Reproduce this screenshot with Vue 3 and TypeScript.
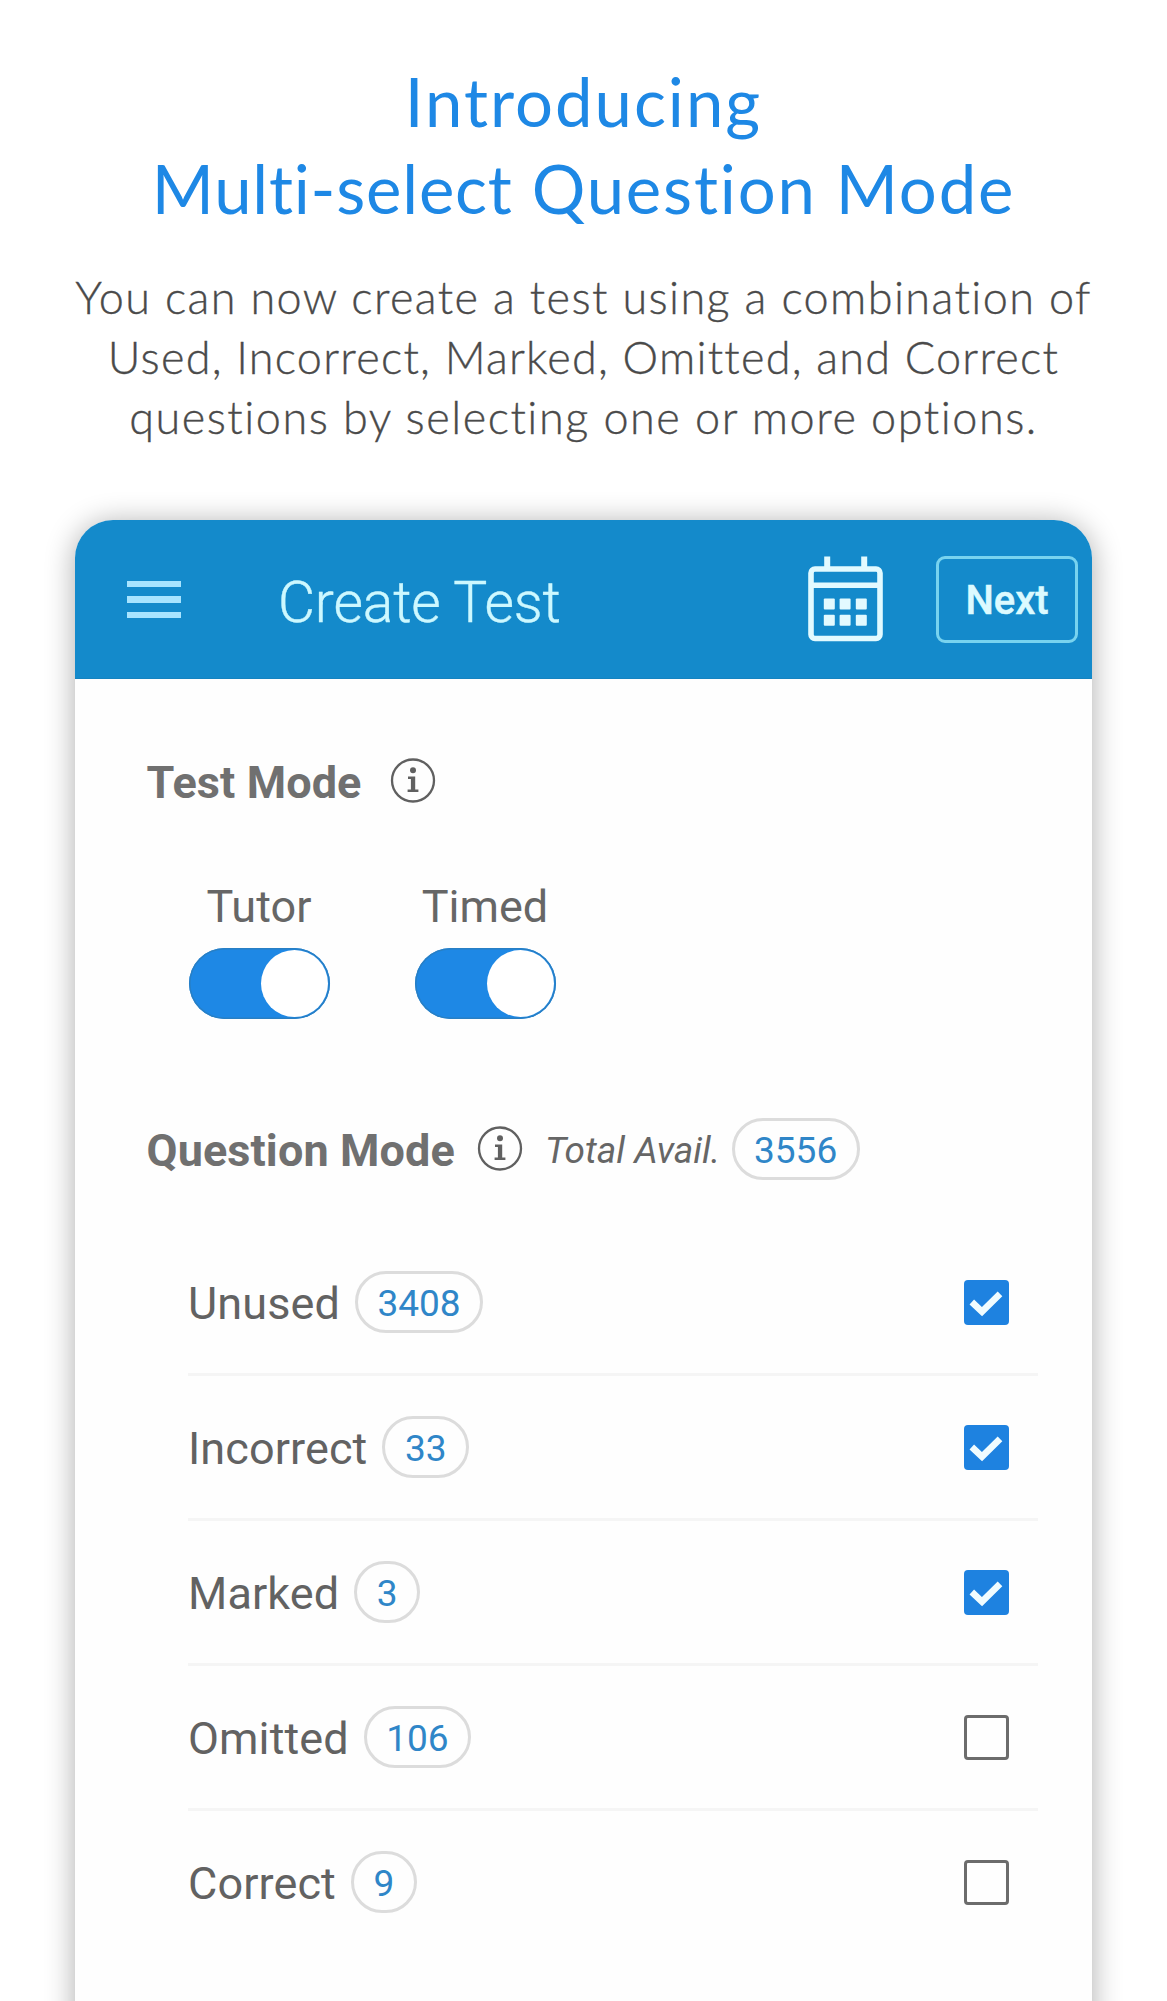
<script setup lang="ts">
import { ref } from 'vue'

interface Toggle { label: string; on: boolean }
interface Option { label: string; count: number; checked: boolean }

const toggles = ref<Toggle[]>([
  { label: 'Tutor', on: true },
  { label: 'Timed', on: true },
])

const total = 3556
const options = ref<Option[]>([
  { label: 'Unused', count: 3408, checked: true },
  { label: 'Incorrect', count: 33, checked: true },
  { label: 'Marked', count: 3, checked: true },
  { label: 'Omitted', count: 106, checked: false },
  { label: 'Correct', count: 9, checked: false },
])
</script>

<template>
  <main class="page">
    <h1 class="title">
      <span class="line t1">Introducing</span>
      <span class="line t2"><span class="tight">Multi-select</span> Question Mode</span>
    </h1>
    <p class="intro">
      <span class="line p1">You can now create a test using a combination of</span>
      <span class="line p2">Used, Incorrect, Marked, Omitted, and Correct</span>
      <span class="line p3">questions by selecting one or more options.</span>
    </p>

    <section class="card">
      <header class="bar">
        <div class="burger"><i></i><i></i><i></i></div>
        <div class="bar-title">Create Test</div>
        <svg class="calendar" width="75" height="86" viewBox="0 0 75 86">
          <g fill="none" stroke="#e2faff">
            <rect x="3" y="13" width="69" height="69.5" rx="4" stroke-width="5.6" />
            <path d="M3 29.3H72" stroke-width="5.6" />
            <path d="M19.2 0.5V12M56.2 0.5V12" stroke-width="6" />
          </g>
          <g fill="#e2faff">
            <rect x="15.8" y="42.5" width="11" height="11" rx="1" />
            <rect x="31.6" y="42.5" width="11" height="11" rx="1" />
            <rect x="47.8" y="42.5" width="11" height="11" rx="1" />
            <rect x="15.8" y="58.7" width="11" height="11" rx="1" />
            <rect x="31.6" y="58.7" width="11" height="11" rx="1" />
            <rect x="47.8" y="58.7" width="11" height="11" rx="1" />
          </g>
        </svg>
        <button class="next">Next</button>
      </header>

      <div class="body">
        <div class="heading">
          <h2 class="test">Test Mode</h2>
          <svg class="info" width="46" height="46" viewBox="0 0 46 46">
            <circle cx="23" cy="22.5" r="21" fill="none" stroke="#606060" stroke-width="2.3" />
            <circle cx="23" cy="12.2" r="3" fill="#606060" />
            <path d="M18 18.6H25.2V31.6H28.4V34H17.6V31.6H20.9V21H18Z" fill="#606060" />
          </svg>
        </div>

        <div class="toggles">
          <div v-for="t in toggles" :key="t.label" class="toggle-col">
            <span class="toggle-label">{{ t.label }}</span>
            <span class="toggle" :class="{ on: t.on }"><span class="knob"></span></span>
          </div>
        </div>

        <div class="heading question">
          <h2 class="qmode">Question Mode</h2>
          <svg class="info" width="46" height="46" viewBox="0 0 46 46">
            <circle cx="23" cy="22.5" r="21" fill="none" stroke="#606060" stroke-width="2.3" />
            <circle cx="23" cy="12.2" r="3" fill="#606060" />
            <path d="M18 18.6H25.2V31.6H28.4V34H17.6V31.6H20.9V21H18Z" fill="#606060" />
          </svg>
          <em class="avail">Total Avail.</em>
          <span class="badge">{{ total }}</span>
        </div>

        <ul class="options">
          <li v-for="o in options" :key="o.label" class="option">
            <span class="option-label">{{ o.label }}</span>
            <span class="badge">{{ o.count }}</span>
            <span class="box" :class="{ checked: o.checked }">
              <svg v-if="o.checked" width="45" height="45" viewBox="0 0 45 45">
                <path d="M7.8 22L18 31.6L36 13.8" fill="none" stroke="#f0fcff" stroke-width="6.6" />
              </svg>
            </span>
          </li>
        </ul>
      </div>
    </section>
  </main>
</template>

<style>
body {
  background: #fff;
}
</style>

<style scoped>
.page {
  box-sizing: border-box;
  height: 2001px;
  overflow: hidden;
  padding-top: 58px;
  font-family: Roboto, sans-serif;
}
.title,
.intro {
  margin: 0;
  text-align: center;
  font-family: Lato, sans-serif;
  font-variant-ligatures: none;
  white-space: nowrap;
}
.title {
  font-size: 67px;
  line-height: 86.5px;
  font-weight: 400;
  color: #1e88e5;
}
.intro {
  margin-top: 36px;
  font-size: 45px;
  line-height: 60px;
  font-weight: 300;
  color: #4a4a4a;
  -webkit-text-stroke: 0.35px #4a4a4a;
}
.line { display: block; }
.t1 { letter-spacing: 2px; }
.t2 { letter-spacing: 1.85px; }
.tight { letter-spacing: 0.8px; }
.p1 { letter-spacing: 1.4px; }
.p2 { letter-spacing: 1.24px; }
.p3 { letter-spacing: 1.52px; }

.card {
  width: 1017px;
  height: 1560px;
  margin: 73px 0 0 75px;
  border-radius: 38px 38px 0 0;
  background: #fefefe;
  box-shadow: 0 3px 30px rgba(0, 0, 0, 0.33);
  overflow: hidden;
}
.bar {
  box-sizing: border-box;
  display: flex;
  align-items: center;
  height: 158.5px;
  padding: 1px 14px 0 52px;
  background: #148acb;
  border-bottom: 1px solid #1583c0;
}
.burger {
  display: flex;
  flex-direction: column;
  gap: 9px;
  width: 54px;
}
.burger i {
  display: block;
  height: 6.5px;
  background: #a8e4ff;
}
.bar-title {
  margin-left: 97px;
  padding-top: 7px;
  font-size: 57px;
  line-height: 70px;
  font-weight: 300;
  letter-spacing: -0.15px;
  color: #cdf8ff;
  -webkit-text-stroke: 0.4px #cdf8ff;
}
.calendar {
  margin-left: auto;
}
.next {
  box-sizing: border-box;
  width: 142px;
  height: 87px;
  margin-left: 53px;
  padding: 4px 0 0;
  border: 3px solid #78d3ef;
  border-radius: 9px;
  background: none;
  font: 500 40px/50px Roboto, sans-serif;
  color: #dcfaff;
  -webkit-text-stroke: 0.5px #dcfaff;
}

.body {
  padding: 72px 54px 0 71.5px;
}
.heading {
  display: flex;
  align-items: center;
  height: 60px;
}
h2 {
  margin: 0;
  padding-top: 4px;
  font-size: 45px;
  line-height: 54px;
  font-weight: 700;
  color: #707070;
}
.test {
  width: 243px;
  letter-spacing: 0.1px;
}
.qmode {
  width: 330.5px;
  letter-spacing: 0.1px;
}
.info {
  flex: none;
}
.toggles {
  display: flex;
  gap: 85px;
  margin: 69px 0 0 42px;
}
.toggle-col {
  display: flex;
  flex-direction: column;
  align-items: center;
  gap: 14.5px;
  width: 141px;
}
.toggle-label {
  font-size: 45px;
  line-height: 54px;
  color: #666;
}
.toggle {
  box-sizing: border-box;
  display: flex;
  align-items: center;
  width: 141px;
  height: 71px;
  padding: 0 2px;
  border-radius: 36px;
  background: #9a9a9a;
}
.toggle.on {
  justify-content: flex-end;
  background: #1e88e5;
  box-shadow: inset 0 0 0 1.5px #287fc4;
}
.knob {
  width: 67px;
  height: 67px;
  border-radius: 50%;
  background: #fff;
}
.question {
  height: 62px;
  margin-top: 99px;
}
.avail {
  margin-left: 22px;
  padding-top: 3px;
  width: 186.5px;
  font-size: 37px;
  line-height: 44px;
  color: #666;
}
.badge {
  box-sizing: border-box;
  height: 62px;
  padding: 2px 19.5px 0;
  border: 3px solid #dcdcdc;
  border-radius: 31px;
  font-size: 37px;
  line-height: 56px;
  color: #2f86c8;
}
.options {
  margin: 51px 0 0 41px;
  padding: 0;
  list-style: none;
}
.option {
  box-sizing: border-box;
  display: flex;
  align-items: center;
  width: 850px;
  height: 145.1px;
  border-bottom: 3px solid #f5f5f5;
}
.option:last-child {
  border-bottom-color: transparent;
}
.option-label {
  margin-right: 15px;
  padding: 4px 0 0 0.5px;
  font-size: 45px;
  line-height: 54px;
  letter-spacing: 0.1px;
  color: #626262;
}
.box {
  box-sizing: border-box;
  width: 45px;
  height: 45px;
  margin: 0 28.5px 0 auto;
  border: 3px solid #6c6c6c;
  border-radius: 4px;
}
.box.checked {
  border: 0;
  background: #1e82e0;
}
.box svg {
  display: block;
}
</style>
